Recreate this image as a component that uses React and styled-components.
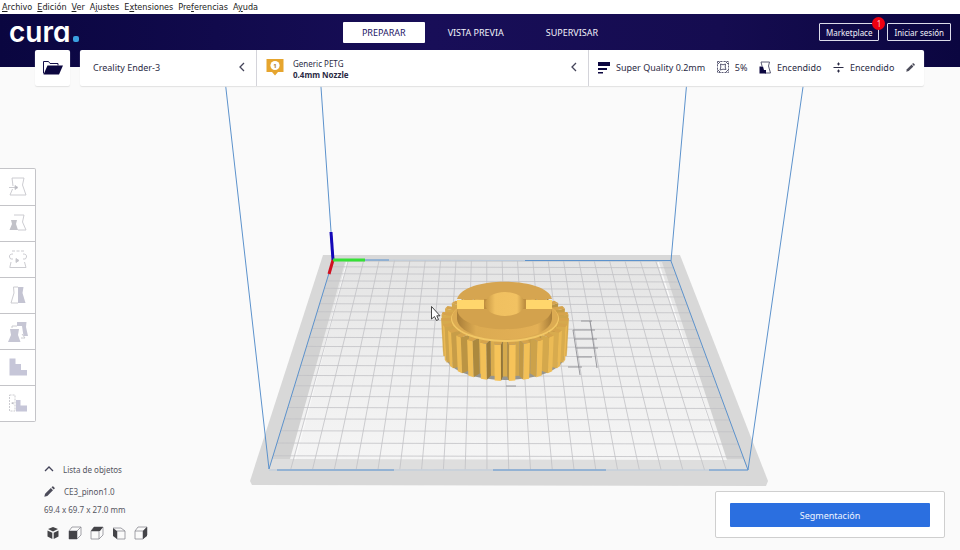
import React, { useState } from 'react';
import styled, { createGlobalStyle } from 'styled-components';

const GlobalStyle = createGlobalStyle`
  * {
    box-sizing: border-box;
  }
  body {
    margin: 0;
    background: #fafafa;
    color: #2b2b45;
    font-family: 'Noto Sans', 'Open Sans', sans-serif;
    font-size: 9px;
  }
  button {
    margin: 0;
    padding: 0;
    border: none;
    background: none;
    color: inherit;
    font: inherit;
    cursor: pointer;
  }
`;

const Page = styled.div`
  display: flex;
  flex-direction: column;
  min-height: 100vh;
`;

const MenuBar = styled.nav`
  display: flex;
  gap: 5px;
  height: 14px;
  padding: 0 2px;
  background: #fff;
`;

const MenuItem = styled.button`
  color: #222;
  font-family: 'DejaVu Sans Condensed', 'DejaVu Sans', sans-serif;
  font-size: 9px;
  line-height: 14px;
`;

const TopBand = styled.header`
  position: relative;
  z-index: 1;
  height: 53px;
  background: linear-gradient(90deg, #0a0640 0%, #180e58 45%, #150c50 75%, #0b0640 100%);
`;

const TitleRow = styled.div`
  display: grid;
  grid-template-columns: 1fr auto 1fr;
  align-items: center;
  height: 36px;
  padding: 0 9px;
`;

const Logo = styled.div`
  display: flex;
  align-items: baseline;
  gap: 3px;
  color: #fff;
  font-family: Inter, sans-serif;
  font-feature-settings: 'cv11';
  font-size: 28px;
  font-weight: 600;
  line-height: 28px;
  &::after {
    content: '';
    width: 6px;
    height: 6px;
    border-radius: 2px;
    background: #3aa0e0;
  }
`;

const Tabs = styled.nav`
  display: flex;
  gap: 4px;
`;

const Tab = styled.button`
  height: 21px;
  padding: 0 19px;
  border-radius: 1px;
  background: ${(props) => (props.$active ? '#fff' : 'transparent')};
  color: ${(props) => (props.$active ? '#1b1464' : '#f2f2fa')};
`;

const Account = styled.div`
  display: flex;
  justify-content: flex-end;
  gap: 8px;
`;

const OutlineButton = styled.button`
  position: relative;
  height: 18px;
  padding: 0 6px;
  border: 1px solid #dcdcea;
  border-radius: 1px;
  color: #f2f2fa;
  font-size: 8px;
`;

const Badge = styled.span`
  position: absolute;
  top: -7px;
  right: -7px;
  width: 13px;
  height: 13px;
  border-radius: 50%;
  background: #f00010;
  color: #ffc0c0;
  font-size: 8px;
  line-height: 13px;
`;

const SettingsRow = styled.div`
  display: flex;
  gap: 10px;
  height: 36px;
  padding: 0 36px 0 35px;
`;

const OpenButton = styled.button`
  display: grid;
  place-items: center;
  width: 35px;
  border-radius: 2px;
  background: #fff;
  box-shadow: 0 1px 1px #e2e2e2;
`;

const SettingsBar = styled.div`
  display: grid;
  flex: 1;
  grid-template-columns: 176fr 332fr 336fr;
  border-radius: 2px;
  background: #fff;
  box-shadow: 0 1px 1px #e2e2e2;
`;

const Section = styled.button`
  display: flex;
  align-items: center;
  justify-content: space-between;
  gap: 9px;
  padding: 0 9px 2px;
  padding-left: ${(props) => (props.$wide ? '13px' : '9px')};
  text-align: left;
  & + & {
    border-left: 1px solid #d4d4da;
  }
`;

const Material = styled.span`
  display: flex;
  flex-direction: column;
  flex: 1;
  padding-top: 4px;
  font-size: 8px;
  line-height: 11px;
`;

const Setting = styled.span`
  display: flex;
  align-items: center;
  gap: 6px;
  white-space: nowrap;
`;

const Workspace = styled.main`
  display: grid;
  flex: 1;
  grid-template-columns: auto 1fr auto;
  grid-template-rows: 1fr auto;
`;

const Scene = styled.svg`
  grid-area: 1 / 1 / -1 / -1;
  width: 100%;
  height: 100%;
  min-height: 483px;
`;

const Tools = styled.div`
  grid-area: 1 / 1;
  align-self: start;
  width: 36px;
  margin-top: 101px;
  border: 1px solid #c4c4c8;
  border-left: none;
  border-radius: 0 2px 2px 0;
  background: #fff;
`;

const Tool = styled.button`
  display: grid;
  place-items: center;
  width: 100%;
  height: 36px;
  & + & {
    border-top: 1px solid #c4c4c8;
  }
`;

const ObjectPanel = styled.section`
  grid-area: 2 / 1 / 3 / 3;
  justify-self: start;
  display: flex;
  flex-direction: column;
  align-items: flex-start;
  padding: 0 0 10px 44px;
  color: #55555f;
  font-size: 8px;
`;

const ObjectLine = styled.button`
  display: flex;
  align-items: center;
  gap: 9px;
  height: 22px;
`;

const Dimensions = styled.p`
  margin: 0;
  line-height: 16px;
`;

const Views = styled.div`
  display: flex;
  gap: 8px;
  margin-top: 8px;
  padding: 0 2px;
`;

const ViewButton = styled.button`
  display: block;
  width: 14px;
  height: 14px;
`;

const ActionPanel = styled.aside`
  grid-area: 2 / 3;
  align-self: end;
  width: 230px;
  margin: 0 15px 12px 0;
  padding: 11px 14px 10px;
  border: 1px solid #cfcfcf;
  border-radius: 2px;
  background: #fff;
`;

const SliceButton = styled.button`
  display: block;
  width: 100%;
  height: 24px;
  border-radius: 1px;
  background: #2b6fe0;
  color: #f0f5ff;
`;

// [before, underlined letter, after]
const menus = [
  ['', 'A', 'rchivo'],
  ['', 'E', 'dición'],
  ['', 'V', 'er'],
  ['A', 'j', 'ustes'],
  ['E', 'x', 'tensiones'],
  ['Pre', 'f', 'erencias'],
  ['A', 'y', 'uda'],
];

const Chevron = ({ up }) => (
  <svg width='10' height='12' viewBox='0 0 10 12' fill='none' stroke='#44445a' strokeWidth='1.3'>
    <path d={up ? 'M1 8 L5 4 L9 8' : 'M7 2 L3 6 L7 10'} />
  </svg>
);

const Pencil = ({ size = 10 }) => (
  <svg width={size} height={size} viewBox='0 0 10 10' fill='#4c4c5a'>
    <path d='M0.3 9.7 L1 7 L6.2 1.8 L8.2 3.8 L3 9 Z' />
    <path d='M6.8 1.2 L7.6 0.4 Q8 0 8.5 0.4 L9.6 1.5 Q10 2 9.6 2.4 L8.8 3.2 Z' />
  </svg>
);

const FolderIcon = () => (
  <svg width='22' height='16' viewBox='0 0 22 16'>
    <path d='M1.5 13.5 V1.5 H6.5 L8 3.5 H16 V5.5' fill='none' stroke='#15104a' strokeWidth='1' />
    <path d='M5.5 5.5 H21 L17 14.5 H1.5 Z' fill='#0c0740' />
  </svg>
);

const MaterialIcon = () => (
  <svg width='18' height='18' viewBox='0 0 18 18'>
    <path d='M0.5 1 H17.5 V14 H12 L9 17.5 L6 14 H0.5 Z' fill='#e6a52e' />
    <circle cx='9' cy='7.5' r='4.6' fill='#fff' />
    <text x='9' y='10' textAnchor='middle' fontSize='6' fontWeight='700' fill='#a87c30'>
      1
    </text>
  </svg>
);

const LayersIcon = () => (
  <svg width='12' height='13' viewBox='0 0 12 13' fill='#0c0740'>
    <path d='M0 1 H12 V5 H0 Z M0 7 H9 V9 H0 Z M0 11 H5 V12.5 H0 Z' />
  </svg>
);

const InfillIcon = () => (
  <svg width='12' height='12' viewBox='0 0 12 12' fill='none' stroke='#4b4b66' strokeWidth='0.9'>
    <rect x='0.5' y='0.5' width='11' height='11' strokeDasharray='2 1' />
    <path d='M0.5 3.5 L3.5 0.5 M8.5 0.5 L11.5 3.5 M11.5 8.5 L8.5 11.5 M3.5 11.5 L0.5 8.5' />
    <path d='M3.5 3 L6 3.8 L8.5 3 L8.2 6 L9 8.5 L6 8.2 L3 9 L3.8 6 Z' />
  </svg>
);

const SupportIcon = () => (
  <svg width='12' height='13' viewBox='0 0 12 13'>
    <path d='M3 5 L2 1 H10.5 L9.5 5 L11.5 12 H6' fill='none' stroke='#4b4b66' strokeWidth='0.9' />
    <path d='M0.5 5.5 H4 L5 9 H7 V12.5 H0.5 Z' fill='#0c0740' />
  </svg>
);

const AdhesionIcon = () => (
  <svg width='11' height='13' viewBox='0 0 11 13' fill='#2b2b45'>
    <path d='M0.5 6 H10.5 V7 H0.5 Z M5 1.5 H6 V2.6 H7.2 L5.5 4.8 L3.8 2.6 H5 Z M5 11.5 H6 V10.4 H7.2 L5.5 8.2 L3.8 10.4 H5 Z' />
  </svg>
);

const toolIcons = {
  Mover: (
    <g fill='none' stroke='#c6c6cc' strokeWidth='0.9'>
      <path d='M4 9 L3 1 H15 L13.5 8 L17 18 H1 L3.5 12' />
      <path d='M0 10.5 H7' />
      <path d='M6 8.5 L9 10.5 L6 12.5 Z' fill='#b4b4bc' />
    </g>
  ),
  Escalar: (
    <g>
      <path d='M5 1 H15 L13.5 8 L17 16 H9' fill='none' stroke='#c6c6cc' strokeWidth='0.9' />
      <path d='M2 6 H8 L7 10 L9 16 H0.5 L3 10 Z' fill='#c2c2c8' />
    </g>
  ),
  Rotar: (
    <g fill='none' stroke='#c6c6cc' strokeWidth='0.9'>
      <path d='M3 1 H15' strokeDasharray='3 1.5' />
      <path d='M2 12 L0.8 17.5 H17 L15.5 12' />
      <path d='M4 4 Q0 4 0.5 7 Q1 10 4 9 M14 4 Q18 4 17.5 7 Q17 10 14 9' />
      <path d='M7 8.5 L10 10.5 L7 12.5 Z' fill='#c6c6cc' />
    </g>
  ),
  Espejo: (
    <g>
      <path d='M9 1 H4.5 L5 7 L2 17 H9' fill='none' stroke='#c6c6cc' strokeWidth='0.9' />
      <path d='M9 1 H14.5 L13.5 7 L16.5 17 H9 Z' fill='#c4c4d2' />
    </g>
  ),
  'Ajustes por modelo': (
    <g>
      <path d='M3 6 V4 H8 M13 12 L16 16 H12' fill='none' stroke='#c6c6cc' strokeWidth='0.9' />
      <path d='M8 0 H17.5 L17 5 L19 14 H14.5 L13 4 H8 Z' fill='#c6c6d4' />
      <path d='M1 7 H10 L9 13 L11.5 20 H-1 L2 13 Z' fill='#c6c6d4' />
    </g>
  ),
  'Bloqueador de soporte': (
    <path d='M0.5 0.5 H6.5 V6 H12 V12 H18 V17.5 H0.5 Z' fill='#c6c6d8' />
  ),
  'Borrar soporte': (
    <g>
      <path d='M0.5 1 H6 V17 H0.5 Z' fill='none' stroke='#c6c6cc' strokeWidth='0.9' strokeDasharray='2 1' />
      <path d='M7 6 H11.5 V11.5 H18 V17.5 H7 Z' fill='#c6c6d8' />
      <path d='M2 9 L4.5 8 V10.5 Z' fill='#b4b4bc' />
    </g>
  ),
};

const cubeFaces = {
  '3D': ['M7 1 L12 3 L7 5.5 L2 3 Z', 'M1.5 4.5 L6.3 6.8 V13 L1.5 10.5 Z', 'M12.5 4.5 L7.7 6.8 V13 L12.5 10.5 Z'],
  Frente: ['M1 5 H9 V13 H1 Z'],
  Arriba: ['M1 5 L4 1 H13 L10 5 Z'],
  Izquierda: ['M1 2 L5 5 V13 L1 10 Z'],
  Derecha: ['M9 5 L13 1 V10 L9 13 Z'],
};

const CubeIcon = ({ view }) => (
  <svg width='14' height='14' viewBox='0 0 14 14'>
    {view !== '3D' && (
      <path
        d={
          view === 'Izquierda'
            ? 'M5 5 H13 V13 H5 Z M1 2 H9 L13 5'
            : 'M1 5 H9 V13 H1 Z M1 5 L4 1 H13 L9 5 M13 1 V9 L9 13'
        }
        fill='none'
        stroke='#8a8a92'
        strokeWidth='0.8'
      />
    )}
    {cubeFaces[view].map((d) => (
      <path key={d} d={d} fill='#444448' />
    ))}
  </svg>
);

// maps the unit square onto the floor of the build volume
const floor = { tl: [333, 260], tr: [671, 261], br: [748, 470], bl: [269, 469] };

function project(u, v) {
  const { tl, tr, br, bl } = floor;
  const dx1 = tr[0] - br[0];
  const dx2 = bl[0] - br[0];
  const dx3 = tl[0] - tr[0] + br[0] - bl[0];
  const dy1 = tr[1] - br[1];
  const dy2 = bl[1] - br[1];
  const dy3 = tl[1] - tr[1] + br[1] - bl[1];
  const det = dx1 * dy2 - dx2 * dy1;
  const g = (dx3 * dy2 - dx2 * dy3) / det;
  const h = (dx1 * dy3 - dx3 * dy1) / det;
  const w = g * u + h * v + 1;
  return [
    ((tr[0] - tl[0] + g * tr[0]) * u + (bl[0] - tl[0] + h * bl[0]) * v + tl[0]) / w,
    ((tr[1] - tl[1] + g * tr[1]) * u + (bl[1] - tl[1] + h * bl[1]) * v + tl[1]) / w,
  ];
}

const gridPath = () => {
  let d = '';
  for (let i = 1; i < 22; i++) {
    const t = i / 22;
    d += `M${project(t, 0)} L${project(t, 1)} M${project(0, t)} L${project(1, t)} `;
  }
  return d;
};

const TEETH = 27;

function gearProfile() {
  const points = [];
  for (let i = 0; i < TEETH; i++) {
    const step = (2 * Math.PI) / TEETH;
    const a = Math.PI / 2 + (i + 0.5) * step;
    points.push([a - step * 0.32, 0.84], [a - step * 0.22, 1], [a + step * 0.22, 1], [a + step * 0.32, 0.84]);
  }
  return points;
}

const topPoint = ([a, r]) => [505 + 64 * r * Math.cos(a), 318 + 27 * r * Math.sin(a)];
const bottomPoint = ([a, r]) => [505 + 62 * r * Math.cos(a), 353 + 28 * r * Math.sin(a)];

function gearWalls() {
  const profile = gearProfile();
  const walls = profile.map((p, i) => {
    const q = profile[(i + 1) % profile.length];
    const p1 = [p[1] * Math.cos(p[0]), p[1] * Math.sin(p[0])];
    const q1 = [q[1] * Math.cos(q[0]), q[1] * Math.sin(q[0])];
    const len = Math.hypot(q1[0] - p1[0], q1[1] - p1[1]);
    const nx = (q1[1] - p1[1]) / len;
    const ny = -(q1[0] - p1[0]) / len;
    // tips catch the light, flanks and roots fall off
    const tip = i % 4 === 1;
    const k = tip ? 0.97 - 0.06 * Math.abs(nx) : 0.58 + 0.26 * Math.max(0, ny - nx * 0.3);
    return {
      depth: (p1[1] + q1[1]) / 2,
      front: ny > 0,
      fill: `rgb(${Math.round(255 * k)}, ${Math.round(202 * k)}, ${Math.round(92 * k)})`,
      points: [topPoint(p), topPoint(q), bottomPoint(q), bottomPoint(p)].join(' '),
    };
  });
  return walls.filter((w) => w.front).sort((a, b) => a.depth - b.depth);
}

const Gear = () => (
  <g>
    <ellipse cx='505' cy='355' rx='60' ry='25' fill='#96958f' />
    {gearWalls().map((wall) => (
      <polygon key={wall.points} points={wall.points} fill={wall.fill} />
    ))}
    <polygon points={gearProfile().map(topPoint).join(' ')} fill='#d6a44c' />
    <ellipse cx='505' cy='319' rx='54' ry='23' fill='#f2c765' />
    <ellipse cx='505' cy='318' rx='53' ry='22' fill='#dcab52' />
    <path d='M457 300 V319 C460 346 549 346 552 319 V300 Z' fill='url(#boss)' />
    <path d='M457 299 C463 276 546 276 552 299 Z' fill='#d6a550' />
    <path d='M457 309 H552 C550 336 459 336 457 309 Z' fill='#d3a24d' />
    <path d='M457 300 H484 V309 H457 Z M526 300 H552 V309 H526 Z' fill='#ffd66c' />
    <path d='M484 299 H526 V309 H484 Z' fill='#c08f40' />
    <ellipse cx='505' cy='304' rx='20' ry='12' fill='url(#bore)' />
  </g>
);

const BuildVolume = () => (
  <Scene viewBox='0 67 960 483' role='img' aria-label='Placa de impresión'>
    <defs>
      <linearGradient id='plate' x1='0' y1='0' x2='0' y2='1'>
        <stop offset='0' stopColor='#e4e4e4' />
        <stop offset='0.5' stopColor='#eeeeee' />
        <stop offset='1' stopColor='#f5f5f5' />
      </linearGradient>
      <linearGradient id='boss'>
        <stop offset='0' stopColor='#a87d38' />
        <stop offset='0.2' stopColor='#dcab52' />
        <stop offset='0.85' stopColor='#e3b056' />
        <stop offset='1' stopColor='#a87d38' />
      </linearGradient>
      <linearGradient id='bore'>
        <stop offset='0' stopColor='#c79744' />
        <stop offset='0.25' stopColor='#f0c060' />
        <stop offset='0.8' stopColor='#f2c262' />
        <stop offset='1' stopColor='#bd8e40' />
      </linearGradient>
    </defs>
    <path d='M323 255 H680 L768 481 L766 486 L252 485 L250 481 Z' fill='#d8d8d8' />
    <path d='M333 260 L671 261 L748 470 L269 469 Z' fill='#d2d2d2' />
    <path d='M269 469 L272 459 H743 L748 470 Z' fill='#dedede' />
    <path d='M345 262 L662 262 L727 460 L290 459 Z' fill='url(#plate)' />
    <path d='M347 262 L295 459 M658 262 L722 460' stroke='#fafafa' strokeWidth='1.5' />
    <path d={gridPath()} stroke='#c2c2c5' strokeWidth='0.8' fill='none' />
    <path
      d='M573 330 L580 375 M590 321 L597 368 M581 321 H592 M573 330 H595 M575 339 H597 M576 348 H598 M577 357 H592 M568 367 H582 M506 386 H516'
      stroke='#85858c'
      strokeWidth='0.8'
    />
    <path d='M333 260 L671 261 M269 470 H748' stroke='#bccbdc' />
    <g stroke='#5c92cc' fill='none'>
      <path d='M225 80 L269 469 L333 260 L320.500 80 M687 80 L671 261 L748 470 L804 80' />
      <path d='M365 260 H389 M525 260.500 H671 M277 470 H394 M493 470 H606 M709 470 H748' />
    </g>
    <path d='M331 232 L333 260' stroke='#1408b8' strokeWidth='3' />
    <path d='M333 260 L329 274' stroke='#d01020' strokeWidth='3' />
    <path d='M333 260 H365' stroke='#35e035' strokeWidth='3' />
    <Gear />
    <path
      d='M431.500 306.500 V319 L434.500 316.500 L436.500 320.500 L438.500 319.500 L436.800 315.800 H440 Z'
      fill='#fff'
      stroke='#333'
      strokeWidth='0.9'
    />
  </Scene>
);

const App = () => {
  const [stage, setStage] = useState('PREPARAR');

  return (
    <Page>
      <GlobalStyle />
      <MenuBar>
        {menus.map(([before, key, after]) => (
          <MenuItem key={before + key + after}>
            {before}
            <u>{key}</u>
            {after}
          </MenuItem>
        ))}
      </MenuBar>
      <TopBand>
        <TitleRow>
          <Logo>cura</Logo>
          <Tabs>
            {['PREPARAR', 'VISTA PREVIA', 'SUPERVISAR'].map((name) => (
              <Tab key={name} $active={stage === name} onClick={() => setStage(name)}>
                {name}
              </Tab>
            ))}
          </Tabs>
          <Account>
            <OutlineButton>
              Marketplace<Badge>1</Badge>
            </OutlineButton>
            <OutlineButton>Iniciar sesión</OutlineButton>
          </Account>
        </TitleRow>
        <SettingsRow>
          <OpenButton aria-label='Abrir archivo'>
            <FolderIcon />
          </OpenButton>
          <SettingsBar>
            <Section $wide>
              Creality Ender-3
              <Chevron />
            </Section>
            <Section>
              <MaterialIcon />
              <Material>
                <span>Generic PETG</span>
                <b>0.4mm Nozzle</b>
              </Material>
              <Chevron />
            </Section>
            <Section>
              <Setting>
                <LayersIcon />
                Super Quality 0.2mm
              </Setting>
              <Setting>
                <InfillIcon />
                5%
              </Setting>
              <Setting>
                <SupportIcon />
                Encendido
              </Setting>
              <Setting>
                <AdhesionIcon />
                Encendido
              </Setting>
              <Pencil size={9} />
            </Section>
          </SettingsBar>
        </SettingsRow>
      </TopBand>
      <Workspace>
        <BuildVolume />
        <Tools>
          {Object.keys(toolIcons).map((name) => (
            <Tool key={name} aria-label={name}>
              <svg width='20' height='20' viewBox='-1 0 20 20'>
                {toolIcons[name]}
              </svg>
            </Tool>
          ))}
        </Tools>
        <ObjectPanel>
          <ObjectLine>
            <Chevron up />
            Lista de objetos
          </ObjectLine>
          <ObjectLine>
            <Pencil size={11} />
            CE3_pinon1.0
          </ObjectLine>
          <Dimensions>69.4 x 69.7 x 27.0 mm</Dimensions>
          <Views>
            {Object.keys(cubeFaces).map((view) => (
              <ViewButton key={view} aria-label={view}>
                <CubeIcon view={view} />
              </ViewButton>
            ))}
          </Views>
        </ObjectPanel>
        <ActionPanel>
          <SliceButton>Segmentación</SliceButton>
        </ActionPanel>
      </Workspace>
    </Page>
  );
};

export default App;
